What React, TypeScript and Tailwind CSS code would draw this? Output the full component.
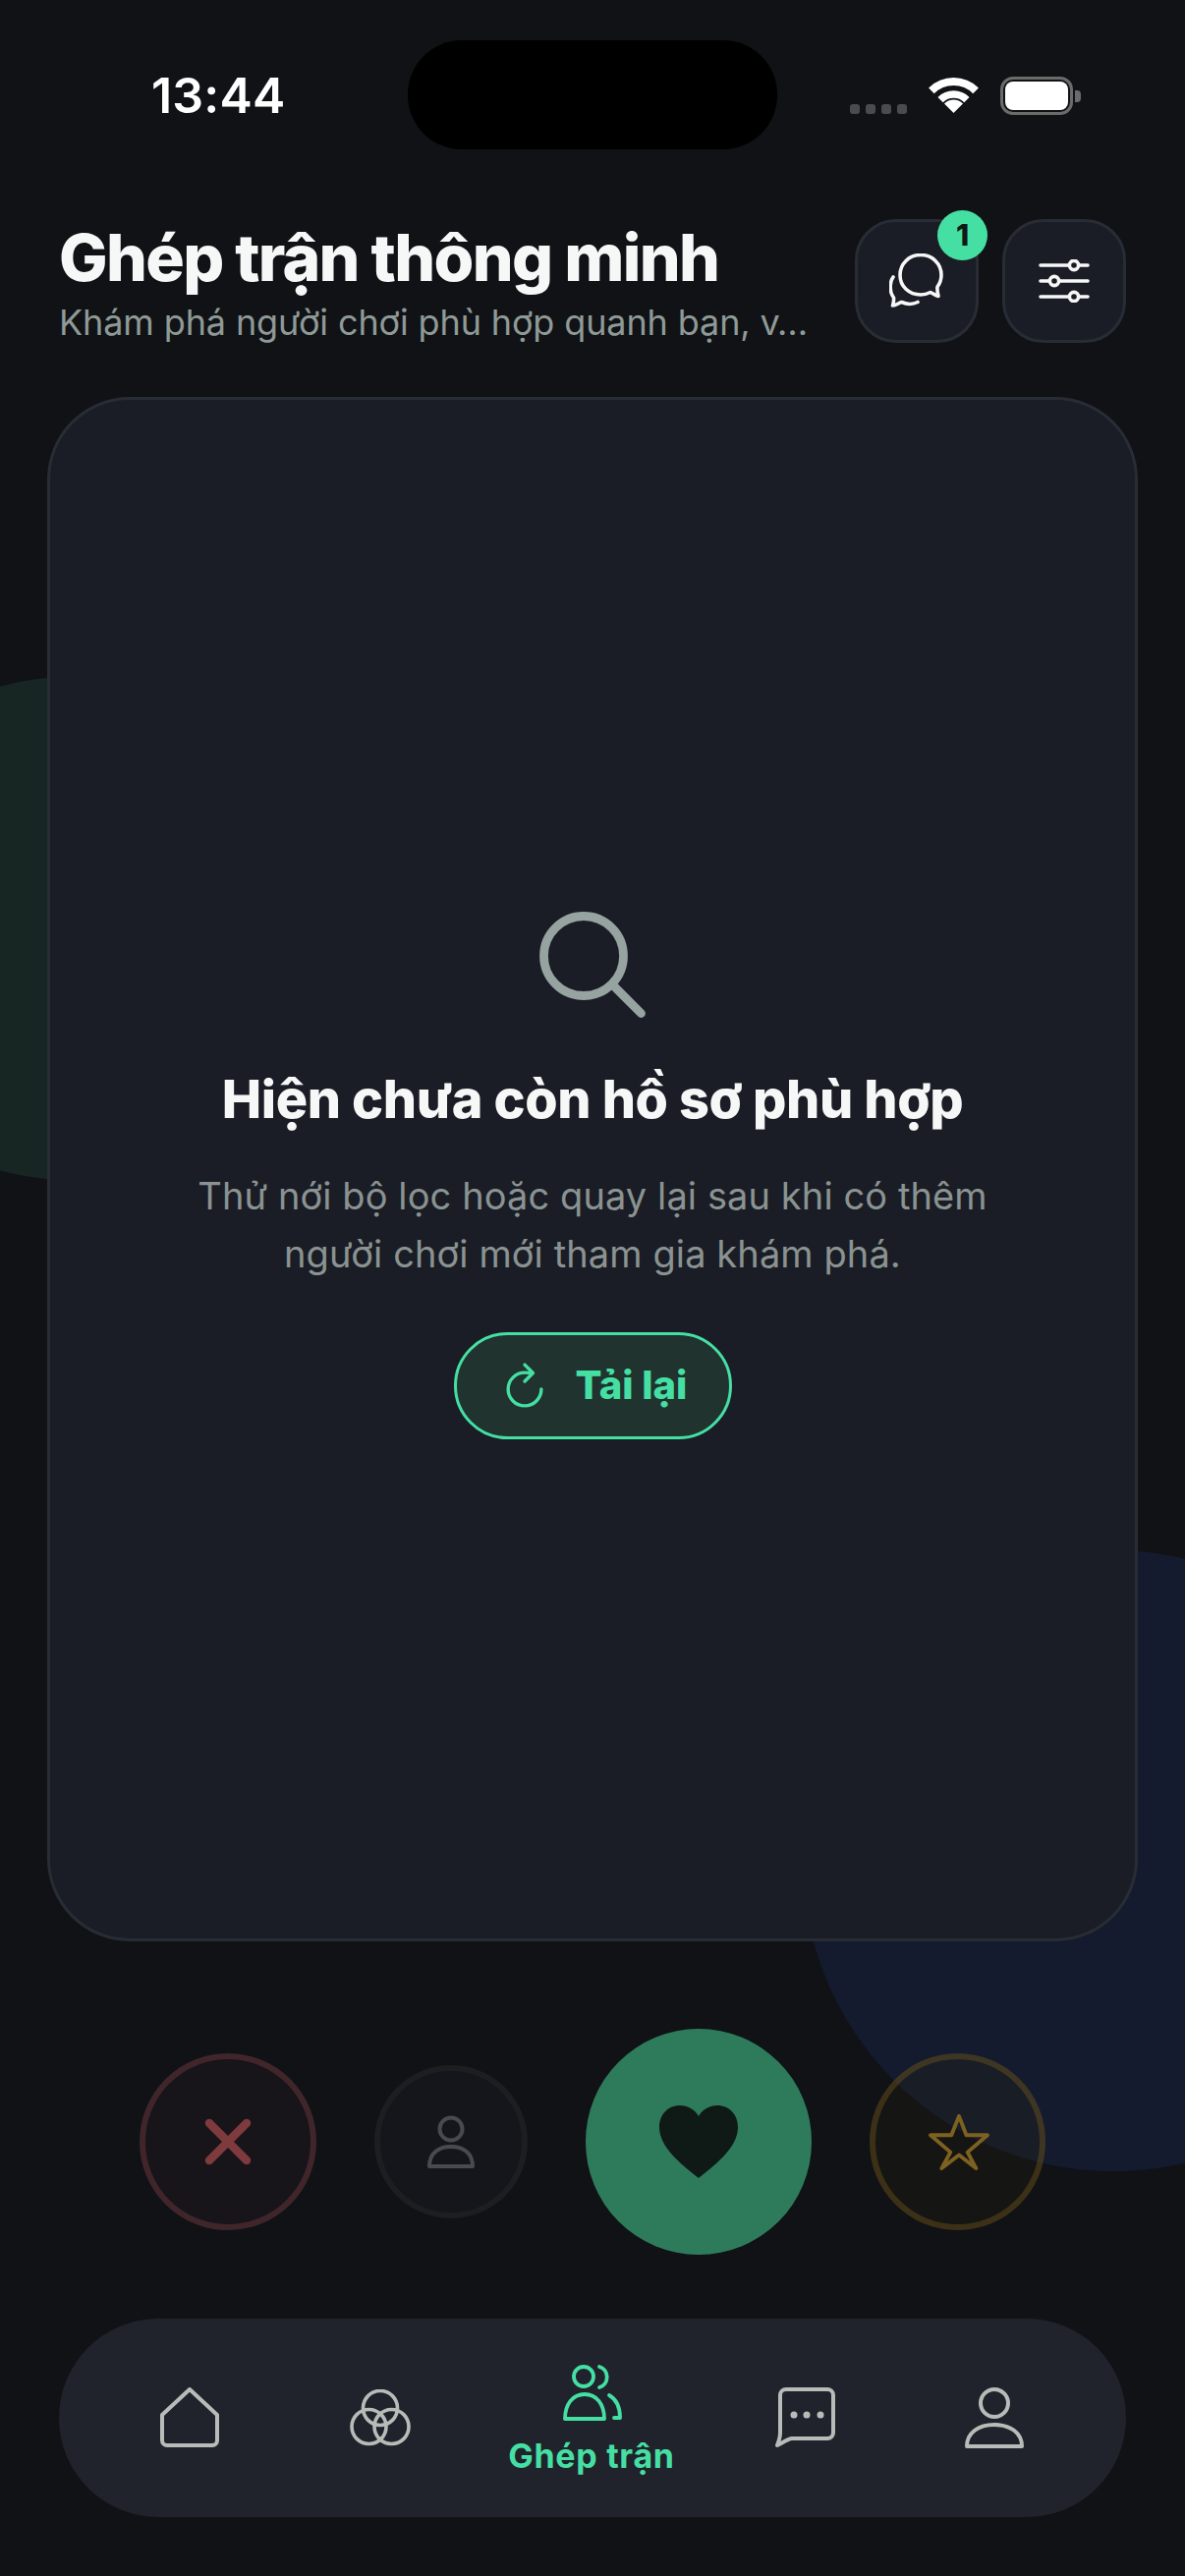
import type { ReactNode } from 'react';

const TABS_LEFT_COLOR = '#b6bdb9';
const ACCENT = '#45dfa4';

function Wifi() {
  return (
    <svg width="51" height="37" viewBox="0 0 51 37" fill="none">
      <path d="M2.9 14.4A32 32 0 0 1 48.1 14.4" stroke="#fff" strokeWidth="8" />
      <path d="M12.1 23.6A19 19 0 0 1 38.9 23.6" stroke="#fff" strokeWidth="7.5" />
      <path d="M25.5 37L16 27.5A13.4 13.4 0 0 1 35 27.5Z" fill="#fff" />
    </svg>
  );
}

function Battery() {
  return (
    <div className="flex items-center gap-[2px]">
      <div className="w-[74px] h-[39px] rounded-[13px] border-[3px] border-[#6b6b6b] p-[2px]">
        <div className="w-full h-full rounded-[8px] bg-white" />
      </div>
      <div className="w-[6px] h-[12px] rounded-r-[4px] bg-[#6b6b6b]" />
    </div>
  );
}

function StatusBar() {
  return (
    <div className="mt-[41px] h-[111px] flex">
      <div className="w-[415px] pl-[154px] flex items-center">
        <span className="text-[50px] leading-[60px] font-semibold tracking-[0.2px] text-white">13:44</span>
      </div>
      <div className="w-[376px] h-[111px] rounded-[55px] bg-black" />
      <div className="flex items-start pl-[74px] pt-[37px]">
        <div className="flex gap-[6px] mt-[28px] mr-[22px]">
          <div className="w-[10px] h-[10px] rounded-[3px] bg-[#4a4b4f]" />
          <div className="w-[10px] h-[10px] rounded-[3px] bg-[#4a4b4f]" />
          <div className="w-[10px] h-[10px] rounded-[3px] bg-[#4a4b4f]" />
          <div className="w-[10px] h-[10px] rounded-[3px] bg-[#4a4b4f]" />
        </div>
        <div className="mr-[22px]"><Wifi /></div>
        <Battery />
      </div>
    </div>
  );
}

function ChatsIcon() {
  return (
    <svg width="56" height="56" viewBox="0 0 56 56" fill="none" stroke="#f5f8f7" strokeWidth="3.6" strokeLinecap="round" strokeLinejoin="round">
      <path d="M32 1.5C20 1.5 11 10.5 11 22C11 33.5 20 42 32 42C36 42 39 41 42 39.5C45 41 47.5 43 50 43.5C49.5 41 48.5 37 49 34C51.5 30.5 53 26.5 53 22C53 10.5 44 1.5 32 1.5Z" />
      <path d="M4 24C1 28 .5 35 2 40C3 43 4 44 4.5 45C5 48 4 51 3.5 53C7 53 10 50 12.5 49.5C18 52 24 52 29 49.5" />
    </svg>
  );
}

function SlidersIcon() {
  return (
    <svg width="52" height="44" viewBox="0 0 52 44" fill="none" stroke="#f5f8f7" strokeWidth="3.6" strokeLinecap="round">
      <path d="M2 6H50M2 22H50M2 38H50" />
      <circle cx="36" cy="6" r="4.6" fill="#1a1d25" />
      <circle cx="16" cy="22" r="4.6" fill="#1a1d25" />
      <circle cx="36" cy="38" r="4.6" fill="#1a1d25" />
    </svg>
  );
}

function Header() {
  return (
    <div className="mt-[71px] mx-[60px] h-[126px] flex justify-between">
      <div className="w-[780px]">
        <h1 className="text-[66px] leading-[76px] mt-[1px] font-extrabold tracking-[-1.7px] text-[#f5f8f7] whitespace-nowrap">Ghép trận thông minh</h1>
        <p className="mt-[8px] text-[36px] leading-[41px] tracking-[-0.12px] text-[#8f9a97] whitespace-nowrap">Khám phá người chơi phù hợp quanh bạn, v…</p>
      </div>
      <div className="flex gap-[24px]">
        <div className="relative w-[126px] h-[126px] rounded-[42px] border-[3px] border-[#282c34] bg-[#1a1d25] flex items-center justify-center">
          <ChatsIcon />
          <div className="absolute -top-[12px] -right-[12px] w-[51px] h-[51px] rounded-full bg-[#45dfa4] flex items-center justify-center text-[30px] font-extrabold text-[#0f1a17]">1</div>
        </div>
        <div className="w-[126px] h-[126px] rounded-[42px] border-[3px] border-[#282c34] bg-[#1a1d25] flex items-center justify-center">
          <SlidersIcon />
        </div>
      </div>
    </div>
  );
}

function EmptyCard() {
  return (
    <div className="relative mt-[55px] ml-[48px] w-[1110px] h-[1572px] rounded-[84px] border-[3px] border-[#282c34] bg-[#1a1d25] flex flex-col items-center justify-center">
      <svg width="132" height="132" viewBox="0 0 512 512" fill="none" stroke="#97a3a0" strokeWidth="34">
        <path d="M221.09 64a157.09 157.09 0 10157.09 157.09A157.1 157.1 0 00221.09 64z" strokeMiterlimit="10" />
        <path d="M338.29 338.29L448 448" strokeLinecap="round" strokeMiterlimit="10" />
      </svg>
      <h2 className="mt-[35px] text-[54px] leading-[72px] font-extrabold tracking-[-0.4px] text-[#f5f8f7] whitespace-nowrap">Hiện chưa còn hồ sơ phù hợp</h2>
      <p className="mt-[33px] text-[38px] leading-[59px] tracking-[0.1px] text-[#8a9391] text-center whitespace-nowrap">
        Thử nới bộ lọc hoặc quay lại sau khi có thêm<br />người chơi mới tham gia khám phá.
      </p>
      <button className="mt-[50px] w-[283px] h-[109px] rounded-[55px] border-[3px] border-[#45dfa4] bg-[#20332f] flex items-center pl-[44px] gap-[25px]">
        <svg width="54" height="54" viewBox="0 0 512 512" fill="none" stroke="#45dfa4" strokeWidth="32" strokeLinecap="round" strokeLinejoin="round" className="-ml-[2px]">
          <path d="M320 146s24.36-12-64-12a160 160 0 10160 160" strokeMiterlimit="10" />
          <path d="M256 58l80 80-80 80" />
        </svg>
        <span className="text-[40px] leading-[48px] font-extrabold text-[#45dfa4] whitespace-nowrap">Tải lại</span>
      </button>
    </div>
  );
}

function Actions() {
  return (
    <div className="mt-[89px] h-[230px] flex items-center justify-center gap-[59px]">
      <div className="w-[180px] h-[180px] rounded-full border-[6px] border-[#40262b] bg-[#17141a] flex items-center justify-center">
        <svg width="50" height="50" viewBox="0 0 50 50" fill="none" stroke="#7e3a3d" strokeWidth="8.5" strokeLinecap="round">
          <path d="M6 6L44 44M44 6L6 44" />
        </svg>
      </div>
      <div className="w-[156px] h-[156px] rounded-full border-[6px] border-[#1c1e22] bg-[#15161b] flex items-center justify-center">
        <svg width="50" height="56" viewBox="0 0 50 56" fill="none" stroke="#474b4e" strokeWidth="4" strokeLinejoin="round">
          <circle cx="25" cy="15" r="11.5" />
          <path d="M3 53C3 39 13 33 25 33C37 33 47 39 47 53Z" />
        </svg>
      </div>
      <div className="w-[230px] h-[230px] rounded-full bg-[#2e7b5c] flex items-center justify-center">
        <svg width="80" height="74" viewBox="0 0 80 74" fill="#0f1a17">
          <path d="M40 74C20 58 0 42 0 22C0 9 9 0 21 0C29 0 36 4 40 11C44 4 51 0 59 0C71 0 80 9 80 22C80 42 60 58 40 74Z" />
        </svg>
      </div>
      <div className="w-[179px] h-[180px] rounded-full border-[6px] border-[rgba(140,105,30,0.33)] bg-[rgba(46,38,12,0.2)] flex items-center justify-center">
        <svg width="62" height="58" viewBox="0 0 64 60" fill="none" stroke="#7d6120" strokeWidth="4" strokeLinejoin="round" className="ml-[2px]">
          <path d="M32 3L39.7 23H62L41 41L50 58L32 44L13.7 58L23 41L2 23H24Z" />
        </svg>
      </div>
    </div>
  );
}

function Tab({ children, className = '' }: { children: ReactNode; className?: string }) {
  return <div className={`w-[193px] flex items-center justify-center ${className}`}>{children}</div>;
}

function TabBar() {
  return (
    <div className="mt-[65px] mx-[60px] h-[202px] rounded-[101px] bg-[#20232b] px-[37px] flex">
      <Tab className="pr-[1px]">
        <svg width="60" height="62" viewBox="0 0 60 62" fill="none" stroke={TABS_LEFT_COLOR} strokeWidth="4" strokeLinejoin="round">
          <path d="M2 28L30 2L58 28V54A5 5 0 0 1 53 59H7A5 5 0 0 1 2 54Z" />
        </svg>
      </Tab>
      <Tab>
        <svg width="62" height="58" viewBox="0 0 62 58" fill="none" stroke={TABS_LEFT_COLOR} strokeWidth="3.6">
          <circle cx="31" cy="19" r="17.5" />
          <circle cx="19.5" cy="38" r="17.5" />
          <circle cx="42.5" cy="38" r="17.5" />
        </svg>
      </Tab>
      <div className="w-[238px] flex flex-col items-center pt-[46px]">
        <svg width="62" height="58" viewBox="0 0 62 58" fill="none" stroke={ACCENT} strokeWidth="3.8" strokeLinejoin="round" strokeLinecap="round" className="ml-[3px]">
          <circle cx="21" cy="13" r="10" />
          <path d="M37 3a11 11 0 0 1 0 21" />
          <path d="M2 56C2 41 10 31 22 31C34 31 42 41 42 56Z" />
          <path d="M47 32C54 36 58 44 58 55H52" />
        </svg>
        <span className="mt-[16px] text-[34px] leading-[40px] font-bold tracking-[0.7px] text-[#45dfa4] whitespace-nowrap">Ghép trận</span>
      </div>
      <Tab className="pl-[4px]">
        <svg width="62" height="62" viewBox="0 0 62 62" fill="none" stroke={TABS_LEFT_COLOR} strokeWidth="4" strokeLinejoin="round">
          <path d="M5 8A6 6 0 0 1 11 2H53A6 6 0 0 1 59 8V46A6 6 0 0 1 53 52H17C13 52 7 57 2 59C4 54 5 50 5 46Z" />
          <circle cx="19" cy="28" r="3.5" fill={TABS_LEFT_COLOR} stroke="none" />
          <circle cx="32" cy="28" r="3.5" fill={TABS_LEFT_COLOR} stroke="none" />
          <circle cx="46" cy="28" r="3.5" fill={TABS_LEFT_COLOR} stroke="none" />
        </svg>
      </Tab>
      <Tab className="pl-[2px]">
        <svg width="60" height="62" viewBox="0 0 60 62" fill="none" stroke={TABS_LEFT_COLOR} strokeWidth="4" strokeLinejoin="round">
          <circle cx="30" cy="16" r="14" />
          <path d="M2 60C2 46 14 38 30 38C46 38 58 46 58 60Z" />
        </svg>
      </Tab>
    </div>
  );
}

export default function App() {
  return (
    <div className="relative w-[1206px] h-[2622px] overflow-hidden bg-[#101216] font-[family-name:Inter,'Noto_Sans',sans-serif]">
      {/* blobs behind the card */}
      <div className="absolute left-[-186px] top-[689px] w-[512px] h-[512px] rounded-full bg-[#172623]" />
      <div className="absolute left-[817px] top-[1578px] w-[632px] h-[632px] rounded-full bg-[#141b2e]" />
      <div className="relative flex flex-col">
        <StatusBar />
        <Header />
        <EmptyCard />
        <Actions />
        <TabBar />
      </div>
    </div>
  );
}
